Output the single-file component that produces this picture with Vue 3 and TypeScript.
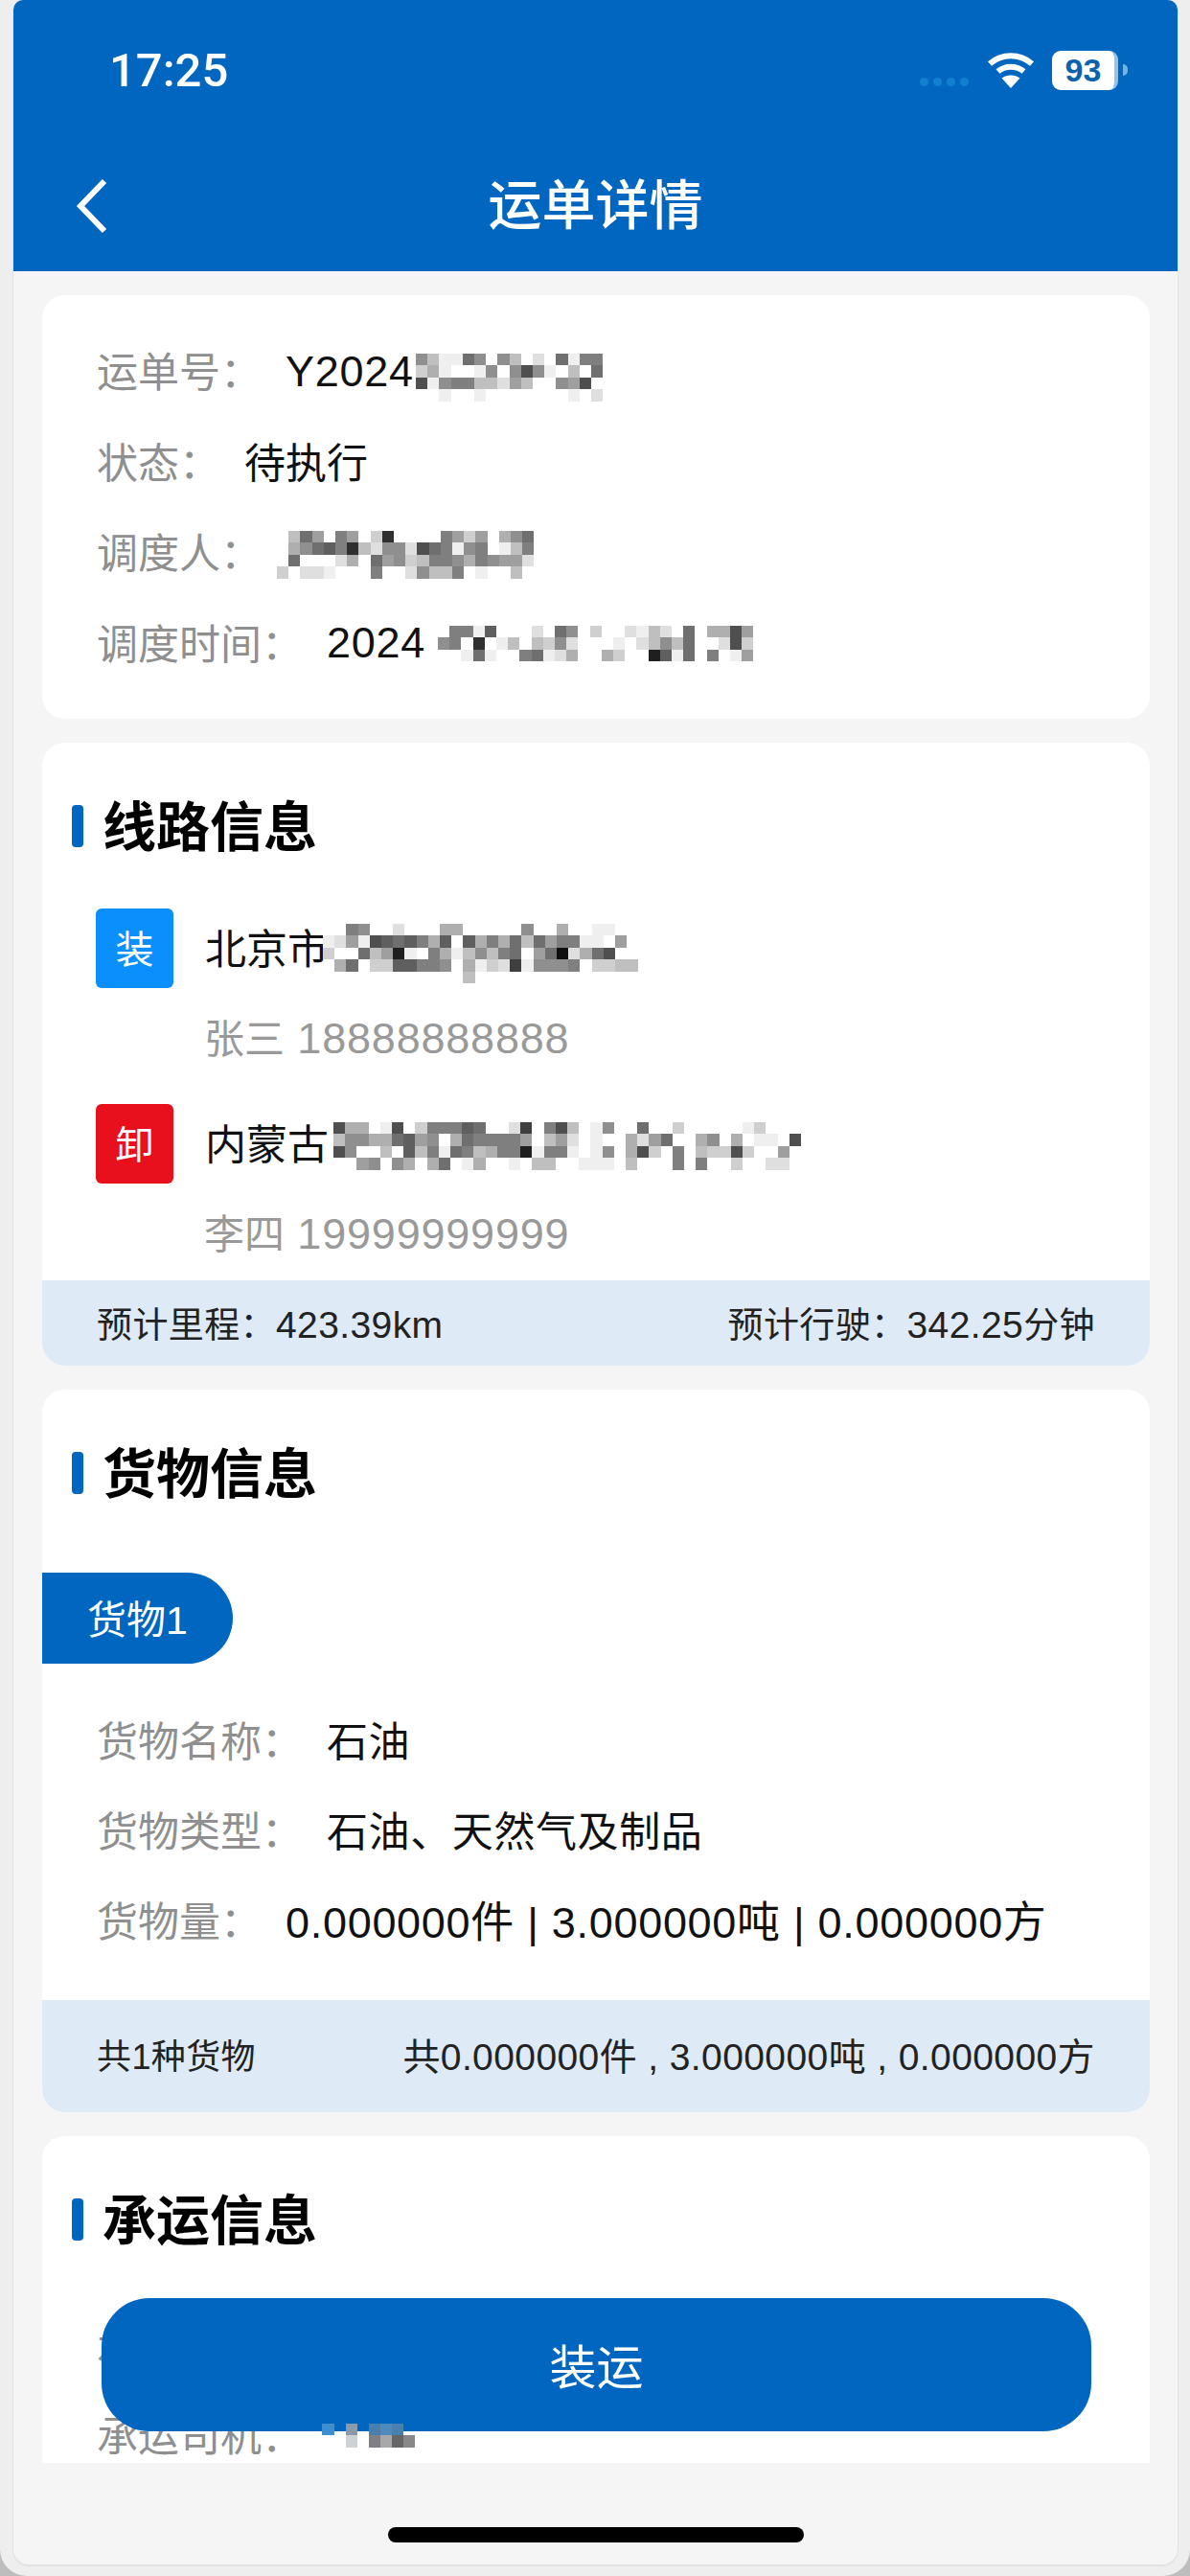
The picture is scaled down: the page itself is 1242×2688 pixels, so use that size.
<template>
  <div class="window">
    <div class="screen">
      <header class="header">
        <div class="status-bar">
          <span class="time">17:25</span>
          <div class="status-icons">
            <div class="signal"><i></i><i></i><i></i><i></i></div>
            <svg class="wifi" width="50" height="38" viewBox="0 0 50 38">
              <path d="M3 12.5C15.500 1.500 34.500 1.500 47 12.500" fill="none" stroke="#fff" stroke-width="6" />
              <path d="M11.500 20.500C19 14 31 14 38.500 20.500" fill="none" stroke="#fff" stroke-width="6" />
              <path d="M25 38L15.500 27.500C21 23.500 29 23.500 34.500 27.500Z" fill="#fff" />
            </svg>
            <div class="battery"><span>93</span></div>
            <i class="battery-nub"></i>
          </div>
        </div>
        <div class="nav">
          <svg class="back" width="34" height="58" viewBox="0 0 34 58">
            <path d="M30 3L5 29L30 55" fill="none" stroke="#fff" stroke-width="6" />
          </svg>
          <h1>运单详情</h1>
          <span></span>
        </div>
      </header>

      <main class="content">
        <section class="card first-card">
          <div class="row">
            <span class="label">运单号：</span>
            <span class="value num">Y2024</span>
            <Mosaic :rows="waybillBlur" class="blur-waybill" />
          </div>
          <div class="row">
            <span class="label">状态：</span>
            <span class="value">待执行</span>
          </div>
          <div class="row">
            <span class="label">调度人：</span>
            <Mosaic :rows="dispatcherBlur" class="blur-dispatcher" />
          </div>
          <div class="row">
            <span class="label">调度时间：</span>
            <span class="value num">2024</span>
            <Mosaic :rows="timeBlur" class="blur-time" />
          </div>
        </section>

        <section class="card">
          <h2 class="section-title">线路信息</h2>
          <div class="route">
            <div class="stop">
              <div class="stop-main">
                <span class="badge load">装</span>
                <span class="address">北京市</span>
                <Mosaic :rows="fromBlur" class="blur-from" />
              </div>
              <div class="contact"><span class="name">张三</span> 18888888888</div>
            </div>
            <div class="stop">
              <div class="stop-main">
                <span class="badge unload">卸</span>
                <span class="address">内蒙古</span>
                <Mosaic :rows="toBlur" class="blur-to" />
              </div>
              <div class="contact"><span class="name">李四</span> 19999999999</div>
            </div>
          </div>
          <div class="card-footer route-footer">
            <span><span class="foot-label">预计里程：</span>423.39km</span>
            <span><span class="foot-label">预计行驶：</span>342.25<span class="foot-label">分钟</span></span>
          </div>
        </section>

        <section class="card">
          <h2 class="section-title">货物信息</h2>
          <div class="tab">货物1</div>
          <div class="goods">
            <div v-for="item in goods" :key="item.label" class="row">
              <span class="label">{{ item.label }}</span>
              <span class="value" :class="item.num ? 'num' : 'goods-text'">{{ item.value }}</span>
            </div>
          </div>
          <div class="card-footer goods-footer">
            <span class="goods-count">共1种货物</span>
            <span>共0.000000件 , 3.000000吨 , 0.000000方</span>
          </div>
        </section>

        <section class="card">
          <h2 class="section-title">承运信息</h2>
          <div class="carrier">
            <div class="row"><span class="label">承运公司：</span></div>
            <div class="row"><span class="label">承运司机：</span></div>
            <div class="row"><span class="label">车牌号：</span></div>
          </div>
        </section>
      </main>

      <footer class="bottom">
        <div class="home-indicator"></div>
      </footer>

      <button class="action">装运</button>
      <svg class="driver-blur" width="104" height="25" viewBox="0 0 104 25" shape-rendering="crispEdges">
        <rect x="0" y="0" width="13" height="12" fill="#3d8fce" />
        <rect x="25" y="0" width="12" height="12" fill="#8a9aa8" />
        <rect x="49" y="0" width="12" height="12" fill="#4a7fab" />
        <rect x="61" y="0" width="12" height="12" fill="#4f8abb" />
        <rect x="73" y="0" width="12" height="12" fill="#4a80ad" />
        <rect x="25" y="12" width="12" height="13" fill="#ccd2d6" />
        <rect x="49" y="12" width="12" height="13" fill="#7f7f85" />
        <rect x="61" y="12" width="12" height="13" fill="#a8a8aa" />
        <rect x="73" y="12" width="12" height="13" fill="#666" />
        <rect x="85" y="12" width="12" height="13" fill="#888" />
      </svg>
    </div>
  </div>
</template>

<script setup lang="ts">
import { h } from 'vue'

// pixelated text, one hex digit per cell: 0 is empty, f is darkest
const CELL_W = 12.2
const CELL_H = 12.4

const Mosaic = (props: { rows: string[] }) => {
  const cols = Math.max(...props.rows.map((r) => r.length))
  const cells: ReturnType<typeof h>[] = []
  props.rows.forEach((row, y) => {
    row.split('').forEach((ch, x) => {
      const v = parseInt(ch, 16)
      if (!v) return
      const g = 255 - v * 16
      cells.push(
        h('rect', {
          x: x * CELL_W,
          y: y * CELL_H,
          width: CELL_W,
          height: CELL_H,
          fill: `rgb(${g},${g},${g})`
        })
      )
    })
  })
  return h(
    'svg',
    {
      width: cols * CELL_W,
      height: props.rows.length * CELL_H,
      'shape-rendering': 'crispEdges'
    },
    cells
  )
}

const waybillBlur = ['7411970740209188', '351001707b710409', 'b1788442640076b0', '0010010000000102']
const dispatcherBlur = [
  '04960860' + '3d0000' + '8636057' + '90',
  '0579a8d' + '42772b9' + '8178014' + '80',
  '0900025' + '0967348' + '8758766' + '20',
  '3022100' + '0800274' + '4801004' + '00'
]
const timeBlur = [
  '0881a00' + '0209703' + '0021420' + '9055b6',
  '780d014' + '0437200' + '0102474' + '9002b3',
  '0019100' + '8912500' + '5300ea1' + '908016'
]
const fromBlur = [
  '0087002' + '0005500' + '0007005' + '001100',
  '1261ba9' + 'a85a0a5' + '8594968' + '811060',
  '300946e' + '1085147' + '489069f' + '259b00',
  '059033a' + 'a887051' + '32c1777' + '803344',
  '0000000' + '0000040' + '0000000' + '000000'
]
const toBlur = [
  'b5501' + 'b0388' + '8a900' + '2c08b' + '40170' + '09003' + '00000' + '13000',
  '47755' + '9a670' + '59888' + '86046' + '20100' + '52690' + '05705' + '0110b',
  'b7004' + '0a481' + '98458' + '8e188' + '10170' + '5b308' + '0433b' + '30060',
  '00670' + '75059' + '01500' + '10440' + '01110' + '40008' + '08003' + '00220'
]

const goods = [
  { label: '货物名称：', value: '石油', num: false },
  { label: '货物类型：', value: '石油、天然气及制品', num: false },
  { label: '货物量：', value: '0.000000件 | 3.000000吨 | 0.000000方', num: true }
]
</script>

<style scoped>
.window {
  height: 2688px;
  box-sizing: border-box;
  padding: 0 13px 12px 14px;
  background: #eeeeee;
  border-radius: 0 0 28px 28px;
  display: flex;
  flex-direction: column;
  overflow: hidden;
  font-family: "Liberation Sans", "Noto Sans CJK SC", sans-serif;
  font-size: 43px;
  color: #111;
}

.screen {
  position: relative;
  flex: 1;
  min-height: 0;
  display: flex;
  flex-direction: column;
  background: #f5f5f5;
  border-radius: 10px 10px 16px 16px;
  box-shadow: 0 1px 0 1px #e2e2e2;
  overflow: hidden;
}

.header {
  height: 283px;
  flex-shrink: 0;
  background: #0066bf;
  color: #fff;
  display: flex;
  flex-direction: column;
}

.status-bar {
  height: 146px;
  box-sizing: border-box;
  padding: 0 52px 0 100px;
  display: flex;
  align-items: center;
  justify-content: space-between;
}

.time {
  font-family: Roboto, "Liberation Sans", sans-serif;
  font-size: 49px;
  font-weight: 500;
}

.status-icons {
  display: flex;
  align-items: center;
}

.signal {
  display: flex;
  gap: 5px;
  margin: 24px 19px 0 0;
}

.signal i {
  width: 9px;
  height: 9px;
  border-radius: 50%;
  background: #1180d0;
}

.wifi {
  margin-right: 18px;
}

.battery {
  width: 69px;
  height: 41px;
  border-radius: 9px;
  background: #fff;
  border-right: 4px solid #8fc3ec;
  box-sizing: border-box;
  display: flex;
  align-items: center;
  justify-content: center;
  color: #0b62ad;
  font-size: 34px;
  font-weight: 700;
}

.battery-nub {
  width: 5px;
  height: 12px;
  margin-left: 5px;
  border-radius: 0 6px 6px 0;
  background: #6fb4e8;
}

.nav {
  flex: 1;
  display: grid;
  grid-template-columns: 1fr auto 1fr;
  align-items: center;
  padding: 0 65px;
}

.nav h1 {
  margin: 0;
  font-size: 56px;
  font-weight: 500;
  line-height: 1;
}

.content {
  flex: 1;
  min-height: 0;
  overflow: hidden;
  box-sizing: border-box;
  padding: 25px 29px 0 30px;
  display: flex;
  flex-direction: column;
  gap: 25px;
}

.card {
  flex-shrink: 0;
  background: #fff;
  border-radius: 24px;
  overflow: hidden;
}

.first-card {
  padding: 30px 0 34px;
}

.first-card .num {
  margin-top: 5px;
}

.row {
  height: 94.500px;
  padding-left: 57px;
  display: flex;
  align-items: center;
}

.label {
  color: #8f8f8f;
  margin-right: 25px;
  flex-shrink: 0;
}

.value {
  white-space: pre;
}

.num {
  font-size: 45px;
  letter-spacing: 0.700px;
}

.goods-text {
  letter-spacing: 0.600px;
}

.blur-waybill {
  margin: 17px 0 0 2px;
}

.blur-dispatcher {
  margin: 9px 0 0 -9px;
}

.blur-time {
  margin: 6px 0 0 13px;
}

.blur-from {
  margin: 10px 0 0 -6px;
}

.blur-to {
  margin: 5px 0 0 5px;
}

.section-title {
  position: relative;
  margin: 61px 0 0;
  padding-left: 63px;
  height: 56px;
  font-size: 56px;
  font-weight: 600;
  line-height: 56px;
  color: #000;
}

.section-title::before {
  content: "";
  position: absolute;
  left: 31px;
  top: 4px;
  width: 12px;
  height: 44px;
  border-radius: 4px;
  background: #0066bf;
}

.route {
  margin-top: 56px;
  padding: 0 56px 18px;
  display: flex;
  flex-direction: column;
  gap: 38px;
}

.stop-main {
  height: 83px;
  display: flex;
  align-items: center;
}

.address {
  margin-top: -6px;
}

.badge {
  width: 81px;
  height: 83px;
  flex-shrink: 0;
  margin-right: 33px;
  padding-bottom: 3px;
  box-sizing: border-box;
  border-radius: 6px;
  display: flex;
  align-items: center;
  justify-content: center;
  color: #fff;
  font-size: 40px;
}

.load {
  background: #0a8ffc;
}

.unload {
  background: #e8101c;
}

.contact {
  margin: 23px 0 0 113px;
  height: 60px;
  line-height: 60px;
  color: #999;
  font-size: 45px;
  letter-spacing: 0.800px;
}

.name {
  font-size: 42px;
  letter-spacing: 0;
}

.card-footer {
  background: #deeaf6;
  box-sizing: border-box;
  padding: 0 57px 0 57px;
  display: flex;
  align-items: center;
  justify-content: space-between;
  font-size: 39px;
  color: #222;
  letter-spacing: 0.400px;
}

.foot-label {
  font-size: 37px;
}

.goods-count {
  font-size: 36px;
}

.route-footer {
  height: 89px;
  padding-bottom: 2px;
}

.goods-footer {
  height: 117px;
  margin-top: 38px;
  padding-bottom: 5px;
}

.tab {
  margin-top: 74px;
  width: 199px;
  height: 95px;
  box-sizing: border-box;
  padding-left: 47px;
  border-radius: 0 48px 48px 0;
  background: #0066bf;
  color: #fff;
  font-size: 41px;
  line-height: 100px;
}

.goods {
  margin-top: 31px;
}

.goods .row {
  height: 94px;
}

.carrier {
  margin-top: 52px;
}

.carrier .row {
  height: 94px;
}

.bottom {
  height: 106px;
  flex-shrink: 0;
  display: flex;
  justify-content: center;
  padding-top: 67px;
  box-sizing: border-box;
}

.home-indicator {
  width: 434px;
  height: 16px;
  border-radius: 8px;
  background: #000;
}

.action {
  position: absolute;
  left: 92px;
  right: 90px;
  top: 2398px;
  height: 139px;
  padding-bottom: 3px;
  border: none;
  border-radius: 50px;
  background: #0066bf;
  color: #fff;
  font-family: inherit;
  font-size: 49px;
}

.driver-blur {
  position: absolute;
  left: 322px;
  top: 2529px;
}
</style>

<style>
html,
body {
  background: #bdbdbd;
}
</style>
